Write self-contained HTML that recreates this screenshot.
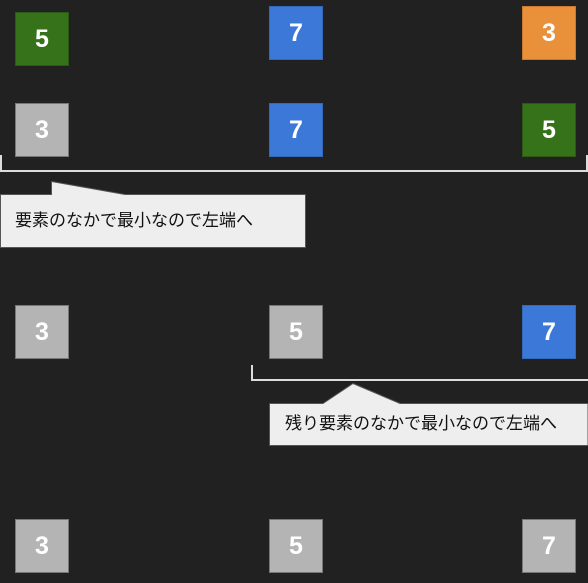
<!DOCTYPE html><html><head><style>
body{margin:0;width:588px;height:583px;background:#212121;position:relative;overflow:hidden;font-family:"Liberation Sans","Noto Sans CJK JP",sans-serif}
.b{position:absolute;width:52px;height:52px;border:1px solid #555;color:#fff;font-weight:bold;font-size:25px;display:flex;align-items:center;justify-content:center}
.g{background:#367219;border-color:#2c5a15}.u{background:#3b78d8;border-color:#3468b8}.o{background:#e8913a;border-color:#c77a2f}.s{background:#b4b4b4;border-color:#777}
.t{position:absolute;font-size:17px;line-height:20px;color:#111;font-family:"Liberation Sans","Noto Sans CJK JP",sans-serif;white-space:nowrap}
</style></head><body>
<div class="b g" style="left:15px;top:12px">5</div>
<div class="b u" style="left:269px;top:6px">7</div>
<div class="b o" style="left:522px;top:6px">3</div>
<div class="b s" style="left:15px;top:103px">3</div>
<div class="b u" style="left:269px;top:103px">7</div>
<div class="b g" style="left:522px;top:103px">5</div>
<div class="b s" style="left:15px;top:305px">3</div>
<div class="b s" style="left:269px;top:305px">5</div>
<div class="b u" style="left:522px;top:305px">7</div>
<div class="b s" style="left:15px;top:519px">3</div>
<div class="b s" style="left:269px;top:519px">5</div>
<div class="b s" style="left:522px;top:519px">7</div>
<svg width="588" height="583" style="position:absolute;left:0;top:0">
<polyline points="1,155 1,171 587,171 587,155" fill="none" stroke="#ddd" stroke-width="2"/>
<polygon points="0.5,194.5 51.5,194.5 51.5,181.5 125,194.5 305.5,194.5 305.5,247.5 0.5,247.5" fill="#eee" stroke="#555"/>
<polyline points="252,365 252,380 588,380" fill="none" stroke="#ddd" stroke-width="2"/>
<polygon points="269.5,403.5 323,403.5 353,383.5 400,403.5 588,403.5 588,445.5 269.5,445.5" fill="#eee" stroke="#555"/>
</svg>
<div class="t" style="left:15px;top:211px">要素のなかで最小なので左端へ</div>
<div class="t" style="left:285px;top:414px">残り要素のなかで最小なので左端へ</div>
</body></html>
